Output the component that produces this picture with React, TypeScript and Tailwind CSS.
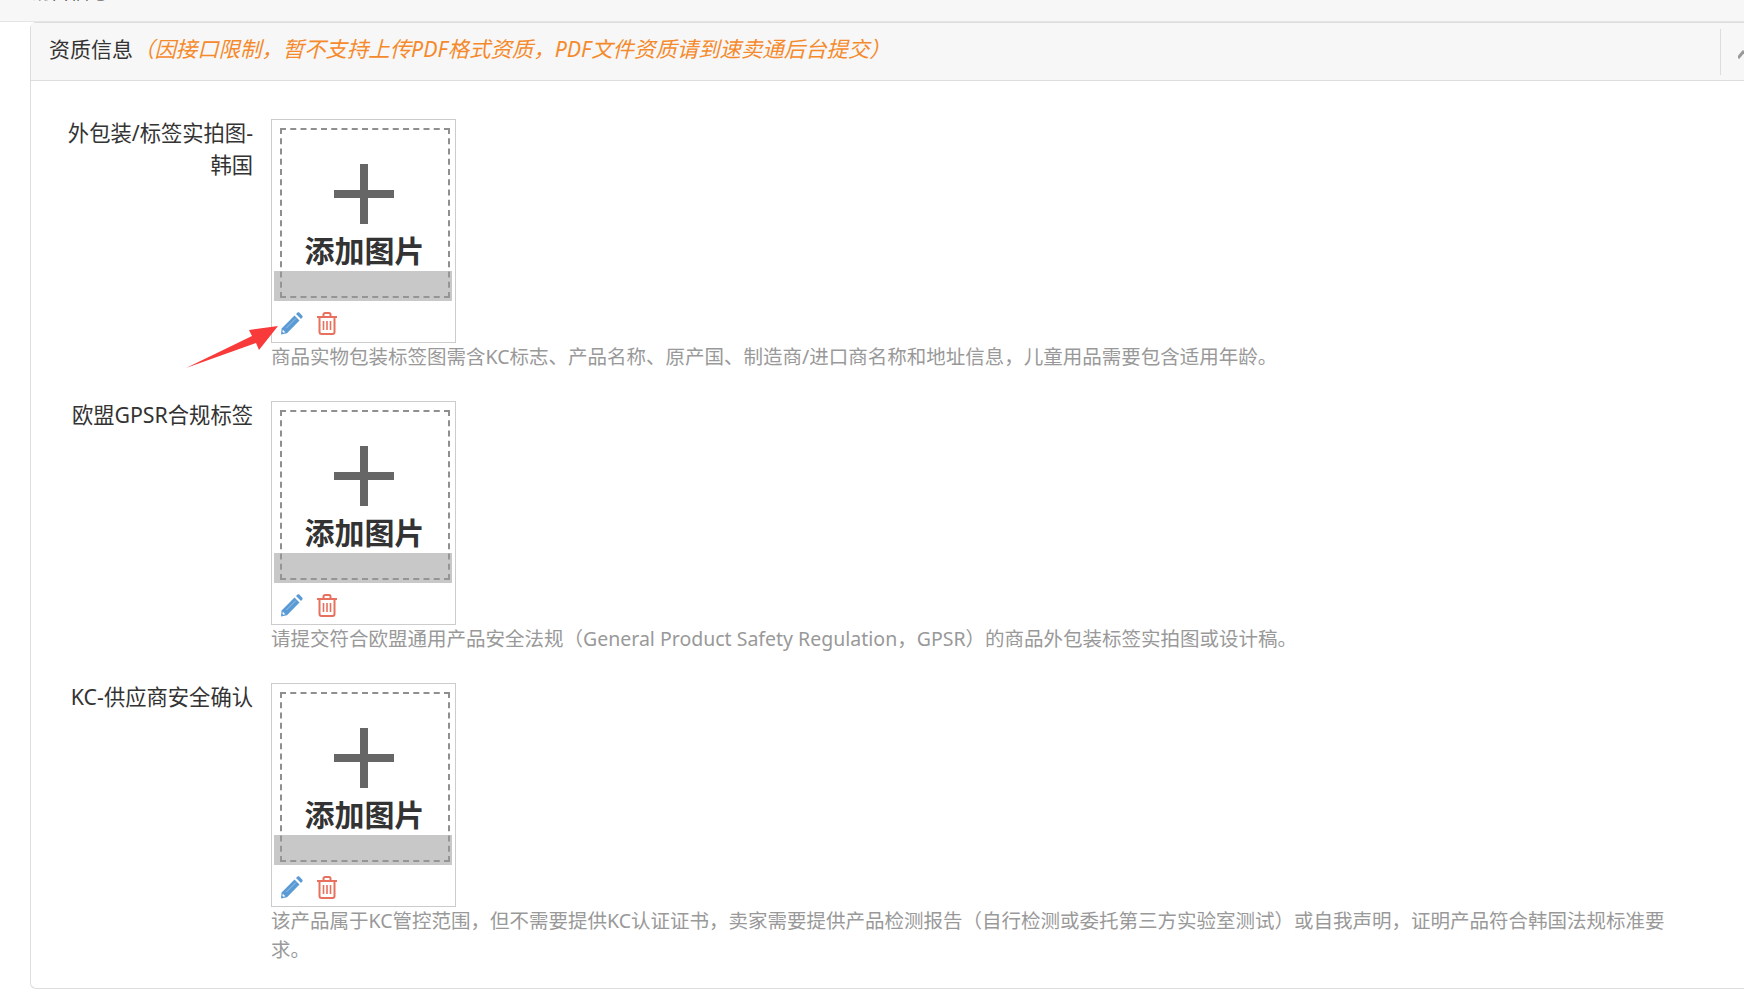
import React from 'react';

const FONT = "font-['Noto_Sans','Noto_Sans_CJK_SC',sans-serif]";

const PencilIcon = () => (
  <svg width="23" height="23" viewBox="0 0 23 23" className="block">
    <path fill="#5b9bd5" d="M14.5 3.6l5 5L7 21.2 1 22.6l.6-6.2z" />
    <path fill="#5b9bd5" d="M16 2l1.6-1.5c.5-.4 1.1-.4 1.6 0l3.2 3.2c.4.5.4 1.1 0 1.6L21 7z" />
    <path fill="#fff" d="M2.8 17.8l2.5 2.5-1.9.5-1-1z" />
    <path stroke="#fff" strokeOpacity="0.45" strokeWidth="0.8" d="M15.8 6.6L6.4 16" />
  </svg>
);

const TrashIcon = () => (
  <svg width="20" height="23" viewBox="0 0 20 23" fill="none" stroke="#e8705f" strokeWidth="2" className="block">
    <path d="M0 5h20" />
    <path d="M6.5 5V2.6C6.5 1.6 7.2 1 8 1h4c.8 0 1.5.6 1.5 1.6V5" />
    <path d="M2.5 5v15c0 1.3.8 2 2 2h11c1.2 0 2-.7 2-2V5" />
    <path d="M6.5 9v9M10 9v9M13.5 9v9" strokeWidth="1.6" />
  </svg>
);

const UploadBox = () => (
  <div className="w-[185px] h-[224px] border border-[#ccc] bg-white flex flex-col">
    <div className="relative mx-[2px] mt-[2px] h-[179px]">
      <div className="absolute left-[6px] right-[3px] top-[6px] bottom-[3px] border-2 border-dashed border-[#8f8f8f]" />
      <div className="relative flex flex-col items-center pt-[42px] h-[150px]">
        <svg width="60" height="60" viewBox="0 0 60 60">
          <path fill="#666" d="M26 0h8v26h26v8H34v26h-8V34H0v-8h26z" />
        </svg>
        <div className="mt-[9px] ml-[2px] text-[30px] leading-[36px] font-bold text-[#333]">添加图片</div>
      </div>
      <div className="absolute left-0 right-[1px] bottom-0 h-[30px] bg-[#9a9a9a]/55" />
    </div>
    <div className="flex items-center pl-[8px] pt-[11px] gap-[14px]">
      <PencilIcon />
      <TrashIcon />
    </div>
  </div>
);

type RowProps = { label: React.ReactNode; help: string };

const Row = ({ label, help }: RowProps) => (
  <div className="flex">
    <div className="w-[222px] -mt-[2px] text-right text-[21.3px] leading-[32px] text-[#333]">{label}</div>
    <div className="ml-[18px] flex-1">
      <UploadBox />
      <p className="-mt-[1px] text-[19.5px] leading-[29px] text-[#999] pr-[70px]">{help}</p>
    </div>
  </div>
);

export default function App() {
  return (
    <div className={`${FONT} relative h-[1001px] w-[1744px] overflow-hidden bg-white`}>
      <div className="h-[22px] overflow-hidden bg-[#f7f7f7] border-b border-[#e5e5e5]">
        <div className="-mt-[20px] pl-[30px] text-[20px] leading-[24px] text-[#333]">销售信息</div>
      </div>
      <div className="ml-[30px] h-[967px] border border-r-0 border-[#ddd] rounded-l-[6px]">
        <div className="relative h-[58px] bg-[#f7f7f7] border-b border-[#ddd] flex items-center pl-[18px]">
          <span className="-mt-[5px] text-[21px] leading-[32px] text-[#333]">资质信息</span>
          <span className="-mt-[5px] text-[21.4px] leading-[32px] italic text-[#f58a2c]">
            {'\uFF08因接口限制\uFF0C暂不支持上传PDF格式资质\uFF0CPDF文件资质请到速卖通后台提交\uFF09'}
          </span>
          <div className="ml-auto mr-[23px] h-[46px] w-px bg-[#ddd]" />
          <svg className="absolute right-0 top-[26px]" width="6" height="10" viewBox="0 0 6 10">
            <path d="M0 9L6 2" stroke="#999" strokeWidth="3" />
          </svg>
        </div>
        <div className="pt-[38px] flex flex-col gap-[30px]">
          <Row
            label={<>外包装/标签实拍图-<br />韩国</>}
            help={'商品实物包装标签图需含KC标志、产品名称、原产国、制造商/进口商名称和地址信息\uFF0C儿童用品需要包含适用年龄。'}
          />
          <Row
            label="欧盟GPSR合规标签"
            help={'请提交符合欧盟通用产品安全法规\uFF08General Product Safety Regulation\uFF0CGPSR\uFF09的商品外包装标签实拍图或设计稿。'}
          />
          <Row
            label="KC-供应商安全确认"
            help={'该产品属于KC管控范围\uFF0C但不需要提供KC认证证书\uFF0C卖家需要提供产品检测报告\uFF08自行检测或委托第三方实验室测试\uFF09或自我声明\uFF0C证明产品符合韩国法规标准要求。'}
          />
        </div>
      </div>
      {/* red arrow annotation */}
      <svg className="absolute left-[180px] top-[318px]" width="100" height="54" viewBox="0 0 100 54">
        <path fill="#f93a3a" d="M6 50L72 18l-3-6 29-4-19 24-3-7z" />
      </svg>
    </div>
  );
}
